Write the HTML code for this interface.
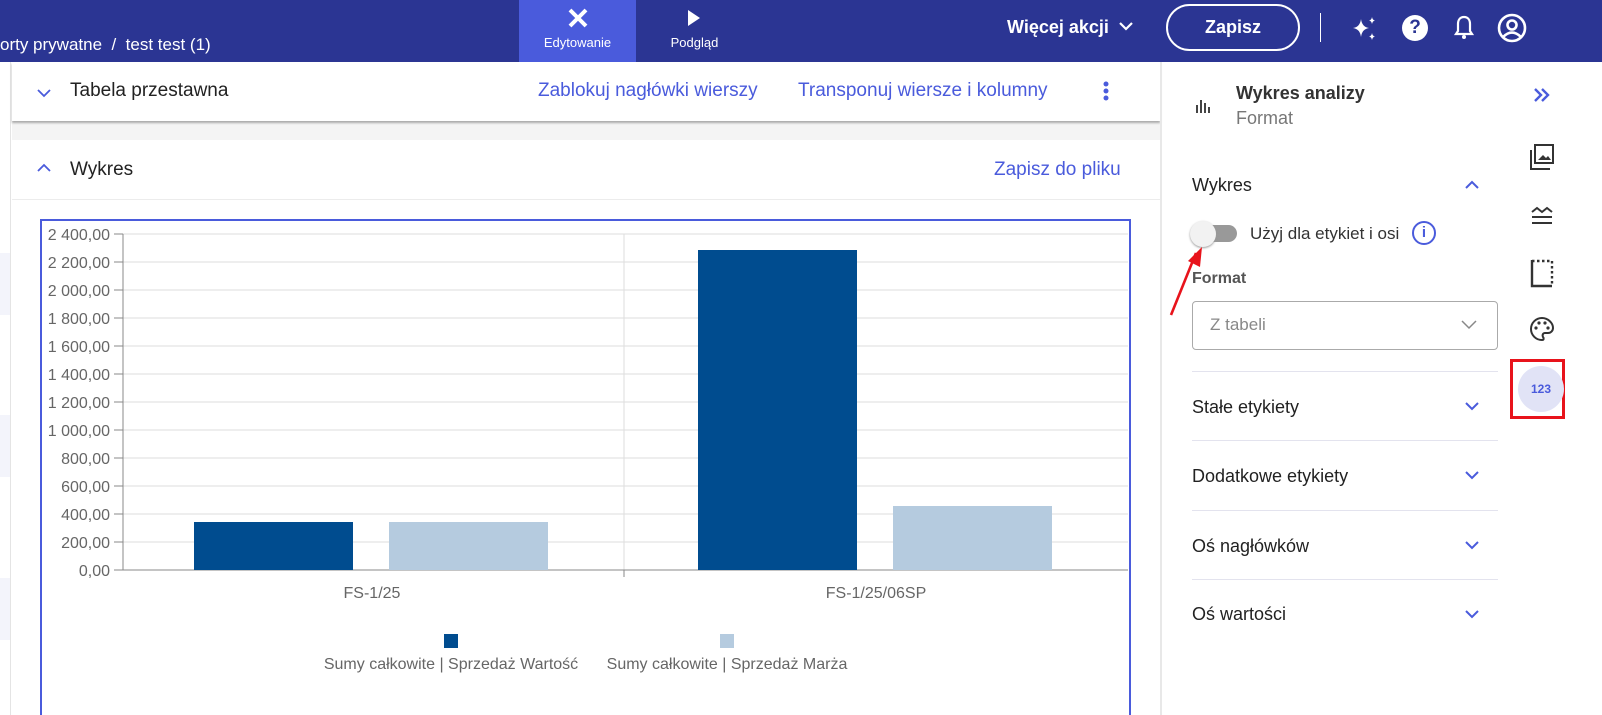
<!DOCTYPE html>
<html><head><meta charset="utf-8"><style>
*{box-sizing:border-box;margin:0;padding:0}
body{width:1602px;height:715px;overflow:hidden;font-family:"Liberation Sans",sans-serif;background:#fff;position:relative;color:#222}
.top{position:absolute;left:0;top:0;width:1602px;height:62px;background:#2b3593;color:#fff}
.abs{position:absolute}
.blue{color:#4a5bdc}
</style></head><body>
<div class="top">
 <div class="abs" style="left:0;top:35px;font-size:17px">orty prywatne &nbsp;/&nbsp; test test (1)</div>
 <div class="abs" style="left:519px;top:0;width:117px;height:62px;background:#4a5bdc"></div>
 <svg class="abs" style="left:566px;top:6px" width="24" height="24" viewBox="0 0 24 24"><path d="M4 4l16 16M20 4L4 20" stroke="#fff" stroke-width="4"/></svg>
 <div class="abs" style="left:519px;top:35px;width:117px;text-align:center;font-size:13px">Edytowanie</div>
 <svg class="abs" style="left:686px;top:9px" width="16" height="18"><path d="M2 1l12 8-12 8z" fill="#fff"/></svg>
 <div class="abs" style="left:636px;top:35px;width:117px;text-align:center;font-size:13px">Podgląd</div>
 <div class="abs" style="left:1007px;top:17px;font-size:18px;font-weight:bold">Więcej akcji</div>
 <svg class="abs" style="left:1119px;top:22px" width="14" height="10"><path d="M1 1l6 6 6-6" stroke="#fff" stroke-width="2.2" fill="none"/></svg>
 <div class="abs" style="left:1166px;top:4px;width:134px;height:47px;border:2px solid #fff;border-radius:24px;text-align:center;line-height:43px;font-size:18px;font-weight:bold">Zapisz</div>
 <div class="abs" style="left:1320px;top:13px;width:1px;height:29px;background:#fff"></div>
 <svg class="abs" style="left:1351px;top:15px" width="28" height="28" viewBox="0 0 28 28"><path d="M10 4q1 8 8 9q-7 1-8 9q-1-8-8-9q7-1 8-9zM21 2q.5 3 3 3.5q-2.5.5-3 3.5q-.5-3-3-3.5q2.5-.5 3-3.5zM21 18q.5 3 3 3.5q-2.5.5-3 3.5q-.5-3-3-3.5q2.5-.5 3-3.5z" fill="#fff"/></svg>
 <div class="abs" style="left:1402px;top:15px;width:26px;height:26px;border-radius:50%;background:#fff;color:#2b3593;font-weight:bold;text-align:center;line-height:26px;font-size:19px">?</div>
 <svg class="abs" style="left:1453px;top:14px" width="22" height="28" viewBox="0 0 22 28"><path d="M11 3c-4 0-6 3-6 7v7l-2 3h16l-2-3v-7c0-4-2-7-6-7z" stroke="#fff" stroke-width="2.2" fill="none"/><circle cx="11" cy="23" r="2" fill="#fff"/></svg>
 <svg class="abs" style="left:1496px;top:12px" width="32" height="32" viewBox="0 0 32 32"><circle cx="16" cy="16" r="13" stroke="#fff" stroke-width="2.6" fill="none"/><circle cx="16" cy="13" r="4.5" stroke="#fff" stroke-width="2.6" fill="none"/><path d="M7 25q9-9 18 0" stroke="#fff" stroke-width="2.6" fill="none"/></svg>
</div>
<div class="abs" style="left:0;top:62px;width:11px;height:653px;background:#fff;border-right:1px solid #e4e4e4"></div>
<div class="abs" style="left:0;top:253px;width:10px;height:62px;background:#f3f4fb"></div>
<div class="abs" style="left:0;top:415px;width:10px;height:62px;background:#f3f4fb"></div>
<div class="abs" style="left:0;top:578px;width:10px;height:62px;background:#f3f4fb"></div>
<div class="abs" style="left:12px;top:62px;width:1148px;height:653px;background:#f4f4f4"></div>
<div class="abs" style="left:12px;top:62px;width:1148px;height:59px;background:#fff;box-shadow:0 2px 2px #aaa"></div>
<svg class="abs" style="left:37px;top:88px" width="14" height="10"><path d="M1 2l6 6 6-6" stroke="#4a5bdc" stroke-width="1.8" fill="none"/></svg>
<div class="abs" style="left:70px;top:80px;font-size:19px">Tabela przestawna</div>
<div class="abs blue" style="left:538px;top:80px;font-size:19px">Zablokuj nagłówki wierszy</div>
<div class="abs blue" style="left:798px;top:80px;font-size:19px">Transponuj wiersze i kolumny</div>
<svg class="abs" style="left:1101px;top:80px" width="10" height="24"><circle cx="5" cy="4" r="2.5" fill="#4a5bdc"/><circle cx="5" cy="11" r="2.5" fill="#4a5bdc"/><circle cx="5" cy="18" r="2.5" fill="#4a5bdc"/></svg>
<div class="abs" style="left:12px;top:140px;width:1148px;height:575px;background:#fff"></div>
<div class="abs" style="left:12px;top:199px;width:1148px;height:1px;background:#ececec"></div>
<svg class="abs" style="left:37px;top:163px" width="14" height="10"><path d="M1 8l6-6 6 6" stroke="#4a5bdc" stroke-width="1.8" fill="none"/></svg>
<div class="abs" style="left:70px;top:159px;font-size:19px">Wykres</div>
<div class="abs blue" style="left:994px;top:159px;font-size:19px">Zapisz do pliku</div>
<svg class="abs" style="left:0;top:0" width="1160" height="715" font-family="Liberation Sans" font-size="16" fill="#666">
<rect x="41" y="220" width="1089" height="500" fill="none" stroke="#4a5bdc" stroke-width="2"/>
<g stroke="#ddd"><line x1="123" y1="234" x2="1128" y2="234"/><line x1="123" y1="262" x2="1128" y2="262"/><line x1="123" y1="290" x2="1128" y2="290"/><line x1="123" y1="318" x2="1128" y2="318"/><line x1="123" y1="346" x2="1128" y2="346"/><line x1="123" y1="374" x2="1128" y2="374"/><line x1="123" y1="402" x2="1128" y2="402"/><line x1="123" y1="430" x2="1128" y2="430"/><line x1="123" y1="458" x2="1128" y2="458"/><line x1="123" y1="486" x2="1128" y2="486"/><line x1="123" y1="514" x2="1128" y2="514"/><line x1="123" y1="542" x2="1128" y2="542"/><line x1="624" y1="234" x2="624" y2="570"/></g>
<line x1="123" y1="234" x2="123" y2="570" stroke="#888"/><line x1="123" y1="570" x2="1128" y2="570" stroke="#888"/><line x1="624" y1="570" x2="624" y2="577" stroke="#888"/>
<g stroke="#888"><line x1="114" y1="234" x2="123" y2="234"/><line x1="114" y1="262" x2="123" y2="262"/><line x1="114" y1="290" x2="123" y2="290"/><line x1="114" y1="318" x2="123" y2="318"/><line x1="114" y1="346" x2="123" y2="346"/><line x1="114" y1="374" x2="123" y2="374"/><line x1="114" y1="402" x2="123" y2="402"/><line x1="114" y1="430" x2="123" y2="430"/><line x1="114" y1="458" x2="123" y2="458"/><line x1="114" y1="486" x2="123" y2="486"/><line x1="114" y1="514" x2="123" y2="514"/><line x1="114" y1="542" x2="123" y2="542"/><line x1="114" y1="570" x2="123" y2="570"/></g>
<g text-anchor="end"><text x="110" y="240">2 400,00</text><text x="110" y="268">2 200,00</text><text x="110" y="296">2 000,00</text><text x="110" y="324">1 800,00</text><text x="110" y="352">1 600,00</text><text x="110" y="380">1 400,00</text><text x="110" y="408">1 200,00</text><text x="110" y="436">1 000,00</text><text x="110" y="464">800,00</text><text x="110" y="492">600,00</text><text x="110" y="520">400,00</text><text x="110" y="548">200,00</text><text x="110" y="576">0,00</text></g>
<rect x="194" y="522" width="159" height="48" fill="#004c8f"/>
<rect x="389" y="522" width="159" height="48" fill="#b5cbdf"/>
<rect x="698" y="250" width="159" height="320" fill="#004c8f"/>
<rect x="893" y="506" width="159" height="64" fill="#b5cbdf"/>
<text x="372" y="598" text-anchor="middle">FS-1/25</text>
<text x="876" y="598" text-anchor="middle">FS-1/25/06SP</text>
<rect x="444" y="634" width="14" height="14" fill="#004c8f"/>
<rect x="720" y="634" width="14" height="14" fill="#b5cbdf"/>
<text x="451" y="669" text-anchor="middle">Sumy całkowite | Sprzedaż Wartość</text>
<text x="727" y="669" text-anchor="middle">Sumy całkowite | Sprzedaż Marża</text>
</svg>
<div class="abs" style="left:1160px;top:62px;width:2px;height:653px;background:#e8e8e8"></div>
<svg class="abs" style="left:1195px;top:98px" width="16" height="16"><rect x="1" y="7" width="2" height="8" fill="#444"/><rect x="5" y="2" width="2" height="13" fill="#444"/><rect x="9" y="5" width="2" height="10" fill="#444"/><rect x="13" y="9" width="2" height="6" fill="#444"/></svg>
<div class="abs" style="left:1236px;top:83px;font-size:18px;font-weight:bold;color:#333">Wykres analizy</div>
<div class="abs" style="left:1236px;top:108px;font-size:18px;color:#777">Format</div>
<div class="abs" style="left:1192px;top:175px;font-size:18px">Wykres</div>
<svg class="abs" style="left:1465px;top:180px" width="14" height="10"><path d="M1 8l6-6 6 6" stroke="#4a5bdc" stroke-width="2" fill="none"/></svg>
<div class="abs" style="left:1192px;top:225px;width:45px;height:17px;border-radius:9px;background:#999"></div>
<div class="abs" style="left:1190px;top:221px;width:26px;height:26px;border-radius:50%;background:#f2f2f2;box-shadow:0 1px 2px #999"></div>
<div class="abs" style="left:1250px;top:224px;font-size:17px;color:#333">Użyj dla etykiet i osi</div>
<div class="abs" style="left:1412px;top:221px;width:24px;height:24px;border:2px solid #4a5bdc;border-radius:50%;color:#4a5bdc;text-align:center;font-weight:bold;font-size:15px;line-height:20px">i</div>
<svg class="abs" style="left:1168px;top:245px" width="40" height="75"><path d="M3 70L28 8" stroke="#e8131b" stroke-width="2.6"/><path d="M34 2l-2 20-12-6z" fill="#e8131b"/></svg>
<div class="abs" style="left:1192px;top:270px;font-size:16px;font-weight:bold;color:#555">Format</div>
<div class="abs" style="left:1192px;top:301px;width:306px;height:49px;border:1px solid #aaa;border-radius:4px"></div>
<div class="abs" style="left:1210px;top:315px;font-size:17px;color:#888">Z tabeli</div>
<svg class="abs" style="left:1461px;top:320px" width="16" height="10"><path d="M1 1l7 7 7-7" stroke="#888" stroke-width="1.5" fill="none"/></svg>
<div class="abs" style="left:1192px;top:371px;width:306px;height:1px;background:#e3e3ee"></div>
<div class="abs" style="left:1192px;top:397px;font-size:18px">Stałe etykiety</div>
<div class="abs" style="left:1192px;top:440px;width:306px;height:1px;background:#e3e3ee"></div>
<div class="abs" style="left:1192px;top:466px;font-size:18px">Dodatkowe etykiety</div>
<div class="abs" style="left:1192px;top:510px;width:306px;height:1px;background:#e3e3ee"></div>
<div class="abs" style="left:1192px;top:536px;font-size:18px">Oś nagłówków</div>
<div class="abs" style="left:1192px;top:579px;width:306px;height:1px;background:#e3e3ee"></div>
<div class="abs" style="left:1192px;top:604px;font-size:18px">Oś wartości</div>
<svg class="abs" style="left:1465px;top:402px" width="14" height="220"><g stroke="#4a5bdc" stroke-width="2" fill="none"><path d="M1 1l6 6 6-6"/><path d="M1 70l6 6 6-6"/><path d="M1 140l6 6 6-6"/><path d="M1 209l6 6 6-6"/></g></svg>
<svg class="abs" style="left:1533px;top:87px" width="18" height="16"><path d="M2 2l6 6-6 6M9 2l6 6-6 6" stroke="#4a5bdc" stroke-width="2.4" fill="none"/></svg>
<svg class="abs" style="left:1529px;top:143px" width="26" height="28" viewBox="0 0 26 28"><rect x="6" y="2" width="18" height="18" stroke="#333" stroke-width="2" fill="none"/><path d="M2 7v19h19" stroke="#333" stroke-width="2" fill="none"/><path d="M9 17l5-5 3 3 2-2 3 4z" fill="#333"/></svg>
<svg class="abs" style="left:1530px;top:203px" width="24" height="22"><path d="M2 9l5-4 5 4 5-4 5 4M2 14h20M2 20h20" stroke="#333" stroke-width="2" fill="none"/></svg>
<svg class="abs" style="left:1530px;top:258px" width="24" height="30"><path d="M2 2v26h20" stroke="#333" stroke-width="2.4" fill="none"/><path d="M2 3h20v24" stroke="#333" stroke-width="2.4" stroke-dasharray="2.5 2.5" fill="none"/></svg>
<svg class="abs" style="left:1529px;top:316px" width="26" height="26" viewBox="0 0 26 26"><path d="M13 2a11 11 0 1 0 0 22c2 0 2-2 1-3-1-2 0-4 2-4h3a5 5 0 0 0 5-5c0-5-5-10-11-10z" stroke="#333" stroke-width="2" fill="none"/><circle cx="7" cy="12" r="1.6" fill="#333"/><circle cx="10" cy="7" r="1.6" fill="#333"/><circle cx="16" cy="7" r="1.6" fill="#333"/><circle cx="19" cy="12" r="1.6" fill="#333"/></svg>
<div class="abs" style="left:1510px;top:359px;width:55px;height:60px;border:3px solid #e8131b"></div>
<div class="abs" style="left:1518px;top:366px;width:46px;height:46px;border-radius:50%;background:#e1e3f6;color:#4a5bdc;font-weight:bold;font-size:12px;text-align:center;line-height:46px">123</div>
</body></html>
